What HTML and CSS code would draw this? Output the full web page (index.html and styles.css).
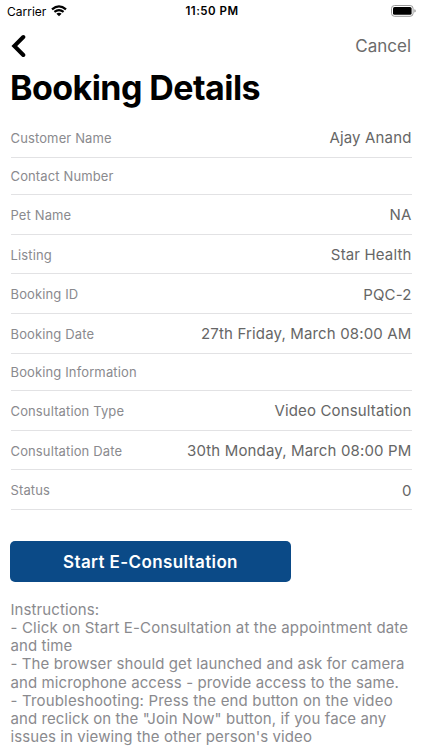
FILE: index.html
```
<!DOCTYPE html>
<html>
    <head>
        <meta charset="UTF-8">
        <title>Booking Details</title>
        <link rel="stylesheet" href="styles.css">
    </head>
    <body>
        <div class="statusbar">
            <div class="carrier">
                <span>Carrier</span>
                <svg width="16" height="12" viewBox="0 0 16 12">
                    <path d="M1 4.4 Q8 -1.6 15 4.4" fill="none" stroke="#000" stroke-width="2.3"/>
                    <path d="M3.4 6.9 Q8 3.2 12.6 6.9" fill="none" stroke="#000" stroke-width="2.1"/>
                    <path d="M5.4 8.7 Q8 6.7 10.6 8.7 L8 11.3 Z"/>
                </svg>
            </div>
            <div class="time">11:50 PM</div>
            <div class="battery">
                <svg width="26" height="12" viewBox="0 0 26 12">
                    <rect x="0.5" y="0.5" width="21.6" height="10.8" rx="3" fill="#fff" stroke="#999"/>
                    <rect x="2" y="2" width="18.6" height="7.8" rx="1.6"/>
                    <path d="M23.3 4.2 Q24.8 4.6 24.8 5.9 Q24.8 7.2 23.3 7.6 Z" fill="#999"/>
                </svg>
            </div>
        </div>
        <header class="navbar">
            <svg class="back" width="16" height="24" viewBox="0 0 16 24">
                <path d="M13.3 3 L4.3 12 L13.3 21" fill="none" stroke="#000" stroke-width="4" stroke-linejoin="miter" stroke-linecap="round"/>
            </svg>
            <a class="cancel">Cancel</a>
        </header>
        <h1>Booking Details</h1>
        <div class="details">
            <div class="row"><span class="label">Customer Name</span><span class="value">Ajay Anand</span></div>
            <div class="row empty"><span class="label">Contact Number</span></div>
            <div class="row"><span class="label">Pet Name</span><span class="value">NA</span></div>
            <div class="row"><span class="label">Listing</span><span class="value">Star Health</span></div>
            <div class="row"><span class="label">Booking ID</span><span class="value">PQC-2</span></div>
            <div class="row"><span class="label">Booking Date</span><span class="value">27th Friday, March 08:00 AM</span></div>
            <div class="row empty"><span class="label">Booking Information</span></div>
            <div class="row"><span class="label">Consultation Type</span><span class="value">Video Consultation</span></div>
            <div class="row"><span class="label">Consultation Date</span><span class="value">30th Monday, March 08:00 PM</span></div>
            <div class="row"><span class="label">Status</span><span class="value">0</span></div>
        </div>
        <button class="btn_start">Start E-Consultation</button>
        <p class="instructions">
            Instructions:<br>
            <span class="wide">- Click on Start E-Consultation at the appointment date</span><br>and time<br>
            - The browser should get launched and ask for camera<br>and microphone access - provide access to the same.<br>
            <span class="wide">- Troubleshooting: Press the end button on the video</span><br>and reclick on the "Join Now" button, if you face any<br>issues in viewing the other person's video
        </p>
    </body>
</html>
```

FILE: styles.css
```
body {
    margin: 0;
    height: 750px;
    overflow: hidden;
    background-color: #fff;
    font-family: Inter, "Liberation Sans", sans-serif;
}
.statusbar {
    display: grid;
    grid-template-columns: 1fr auto 1fr;
    align-items: center;
    height: 22px;
    padding: 0 5px 0 7px;
    font-size: 12px;
}
.carrier {
    display: flex;
    align-items: center;
    gap: 5px;
}
.time {
    font-weight: 600;
    font-size: 11.5px;
    letter-spacing: 0.5px;
}
.battery {
    display: flex;
    justify-content: flex-end;
}
.navbar {
    display: flex;
    justify-content: space-between;
    align-items: center;
    height: 48px;
    padding: 0 11px 0 10px;
}
.cancel {
    color: #6b6b6b;
    font-size: 17px;
}
h1 {
    margin: 0;
    padding-left: 10px;
    height: 48px;
    line-height: 36px;
    font-size: 34px;
    font-weight: 700;
    letter-spacing: -0.56px;
}
.details {
    margin: 0 10.5px;
}
.row {
    display: flex;
    justify-content: space-between;
    align-items: center;
    box-sizing: border-box;
    height: 39.7px;
    padding-top: 1px;
    border-bottom: 1px solid #e2e2e4;
}
.empty {
    height: 37.3px;
}
.label {
    color: #8a8a8e;
    font-size: 13px;
    letter-spacing: 0.13px;
}
.value {
    color: #666;
    font-size: 15px;
    letter-spacing: 0.15px;
}
.btn_start {
    display: block;
    width: 281px;
    height: 41px;
    margin: 31px 0 0 10px;
    border: none;
    border-radius: 5px;
    background-color: #0b4a87;
    color: #fff;
    font-family: inherit;
    font-size: 17px;
    font-weight: 600;
    letter-spacing: 0.38px;
}
.instructions {
    margin: 18.5px 0 0 10.5px;
    color: #8a8a8e;
    font-size: 15px;
    line-height: 18.25px;
    letter-spacing: 0.09px;
    white-space: nowrap;
}
.wide {
    letter-spacing: 0.17px;
}
```
